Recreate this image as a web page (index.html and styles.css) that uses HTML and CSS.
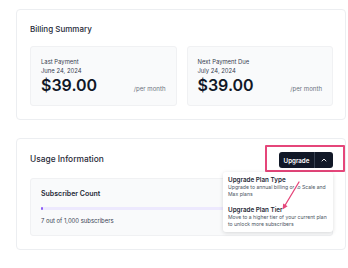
FILE: index.html
```html
<!DOCTYPE html>
<html lang="en">
<head>
    <meta charset="UTF-8">
    <meta name="viewport" content="width=device-width, initial-scale=1.0">
    <title>Billing</title>
    <link rel="stylesheet" href="styles.css">
</head>
<body>
    <div class="page">
        <section class="card">
            <h2 class="card-title">Billing Summary</h2>
            <div class="payments">
                <div class="payment">
                    <p class="payment-label">Last Payment</p>
                    <p class="payment-date">June 24, 2024</p>
                    <div class="payment-row">
                        <span class="amount">$39.00</span>
                        <span class="period">/per month</span>
                    </div>
                </div>
                <div class="payment">
                    <p class="payment-label">Next Payment Due</p>
                    <p class="payment-date">July 24, 2024</p>
                    <div class="payment-row">
                        <span class="amount">$39.00</span>
                        <span class="period">/per month</span>
                    </div>
                </div>
            </div>
        </section>

        <section class="card">
            <div class="usage-header">
                <h2 class="card-title usage-title">Usage Information</h2>
                <div class="upgrade-wrap">
                    <div class="highlight"></div>
                    <div class="split-button">
                        <button class="split-main">Upgrade</button>
                        <button class="split-toggle">
                            <svg width="6" height="4" viewBox="0 0 6 4"><path d="M1 3 L3 1 L5 3" fill="none" stroke="#fff" stroke-width="0.9" stroke-linecap="round" stroke-linejoin="round"/></svg>
                        </button>
                    </div>
                    <div class="menu">
                        <div class="menu-item">
                            <div class="menu-title">Upgrade Plan Type</div>
                            <div class="menu-desc">Upgrade to annual billing or to Scale and Max plans</div>
                        </div>
                        <div class="menu-item">
                            <div class="menu-title">Upgrade Plan Tier</div>
                            <div class="menu-desc">Move to a higher tier of your current plan to unlock more subscribers</div>
                        </div>
                        <svg class="pointer" width="24" height="32" viewBox="0 0 24 32">
                            <path d="M20 2 L5 27" fill="none" stroke="#fff" stroke-width="3" stroke-linecap="round"/>
                            <path d="M20 2 L5 27" fill="none" stroke="#e5467a" stroke-width="1.3" stroke-linecap="round"/>
                            <path d="M3.5 29.5 L4.2 23.5 L8.6 26.2 Z" fill="#e5467a"/>
                        </svg>
                    </div>
                </div>
            </div>
            <div class="stat">
                <div class="stat-title">Subscriber Count</div>
                <div class="bar"><div class="bar-fill" style="width: 0.7%"></div></div>
                <div class="stat-text">7 out of 1,000 subscribers</div>
            </div>
        </section>

        <section class="card"></section>
    </div>
</body>
</html>
```

FILE: styles.css
```css
html, body {
    margin: 0;
    height: 100%;
    overflow: hidden;
}
body {
    font-family: Inter, 'Noto Sans', sans-serif;
    color: #111827;
    background-color: #fff;
}
.page {
    padding: 9px 2px 0 16px;
    display: flex;
    flex-direction: column;
    gap: 18px;
}
.card {
    border: 1px solid #eceef1;
    border-radius: 4px;
    padding: 13px 12px 13px 13px;
    min-height: 60px;
}
.card-title {
    margin: 0;
    font-size: 8px;
    font-weight: 500;
    line-height: 12px;
    color: #1f2937;
}
.payments {
    display: grid;
    grid-template-columns: 1fr 1fr;
    gap: 10px;
    margin-top: 11px;
}
.payment {
    background-color: #f9fafb;
    border: 1px solid #f0f1f3;
    border-radius: 3px;
    padding: 10px;
}
.payment-label,
.payment-date {
    margin: 0;
    font-size: 5.9px;
    line-height: 9px;
    color: #374151;
}
.payment-row {
    display: flex;
    justify-content: space-between;
    align-items: baseline;
}
.amount {
    font-size: 16px;
    font-weight: 600;
    line-height: 20px;
    color: #111827;
}
.period {
    font-size: 6.1px;
    color: #6b7280;
}
.usage-header {
    display: flex;
    justify-content: space-between;
    align-items: flex-start;
}
.usage-title {
    font-size: 8.4px;
    line-height: 12px;
    margin-top: 1px;
}
.upgrade-wrap {
    position: relative;
}
.highlight {
    position: absolute;
    left: -14px;
    right: -12px;
    top: -7px;
    bottom: -4px;
    border: 2px solid #e5467a;
    border-radius: 1px;
}
.split-button {
    display: flex;
    height: 16px;
    background-color: #111827;
    border-radius: 3px;
}
.split-button button {
    border: none;
    background: none;
    color: #fff;
    font-family: inherit;
    padding: 0;
    cursor: pointer;
}
.split-main {
    width: 36px;
    font-size: 6.2px;
    font-weight: 600;
    border-right: 1px solid #374151 !important;
}
.split-toggle {
    width: 18px;
    display: flex;
    align-items: center;
    justify-content: center;
}
.menu {
    position: absolute;
    right: 0;
    top: 20px;
    width: 110px;
    background-color: #fff;
    border-radius: 3px;
    box-shadow: 0 1px 4px rgba(0, 0, 0, 0.14);
    z-index: 2;
}
.menu-item {
    padding: 4px 2px 4px 5px;
}
.menu-title {
    font-size: 6.3px;
    font-weight: 600;
    line-height: 8px;
    color: #1f2937;
}
.menu-desc {
    font-size: 5.1px;
    line-height: 7px;
    color: #4b5563;
}
.pointer {
    position: absolute;
    left: 56px;
    top: 8px;
}
.stat {
    margin-top: 10px;
    background-color: #f9fafb;
    border: 1px solid #f0f1f3;
    border-radius: 3px;
    padding: 10px;
}
.stat-title {
    font-size: 7px;
    font-weight: 600;
    line-height: 10px;
    color: #1f2937;
}
.bar {
    margin-top: 8px;
    height: 3px;
    background-color: #ede9fe;
    border-radius: 2px;
}
.bar-fill {
    height: 100%;
    min-width: 2px;
    background-color: #8b5cf6;
    border-radius: 2px;
}
.stat-text {
    margin-top: 6px;
    font-size: 5.9px;
    line-height: 9px;
    color: #374151;
}
```
